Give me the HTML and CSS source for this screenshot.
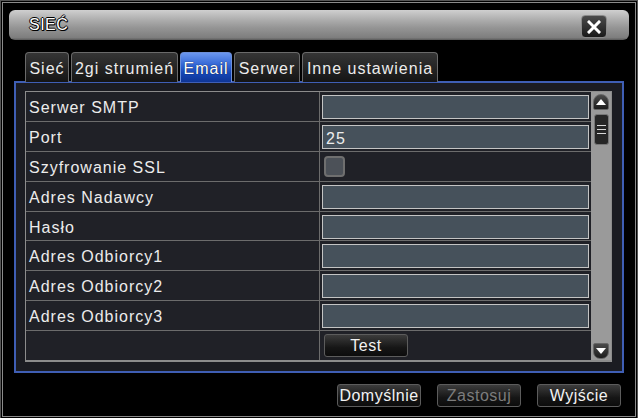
FILE: index.html
```html
<!DOCTYPE html>
<html lang="pl">
<head>
<meta charset="utf-8">
<title>SIEĆ</title>
<link rel="stylesheet" href="styles.css">
</head>
<body>
<div class="frame">
  <div class="titlebar">
    <span class="title">SIEĆ</span>
    <button class="close" aria-label="Zamknij">
      <svg width="14" height="14" viewBox="0 0 14 14"><path d="M2 2 L12 12 M12 2 L2 12" stroke="#fff" stroke-width="3" stroke-linecap="square"/></svg>
    </button>
  </div>
  <div class="tabs">
    <div class="tab t1">Sieć</div>
    <div class="tab t2">2gi strumień</div>
    <div class="tab t3 active">Email</div>
    <div class="tab t4">Serwer</div>
    <div class="tab t5">Inne ustawienia</div>
  </div>
  <div class="panel">
    <div class="table">
      <div class="rows">
        <div class="row"><div class="label">Serwer SMTP</div><div class="cell"><div class="input"></div></div></div>
        <div class="row"><div class="label">Port</div><div class="cell"><div class="input">25</div></div></div>
        <div class="row"><div class="label">Szyfrowanie SSL</div><div class="cell"><div class="check"></div></div></div>
        <div class="row"><div class="label">Adres Nadawcy</div><div class="cell"><div class="input"></div></div></div>
        <div class="row"><div class="label">Hasło</div><div class="cell"><div class="input"></div></div></div>
        <div class="row"><div class="label">Adres Odbiorcy1</div><div class="cell"><div class="input"></div></div></div>
        <div class="row"><div class="label">Adres Odbiorcy2</div><div class="cell"><div class="input"></div></div></div>
        <div class="row"><div class="label">Adres Odbiorcy3</div><div class="cell"><div class="input"></div></div></div>
        <div class="row last"><div class="label"></div><div class="cell"><div class="btn test">Test</div></div></div>
      </div>
      <div class="scrollbar">
        <div class="sb-up"><svg width="10" height="6" viewBox="0 0 10 6"><path d="M0 6 L5 0 L10 6 Z" fill="#fff"/></svg></div>
        <div class="sb-thumb"><span></span><span></span><span></span></div>
        <div class="sb-space"></div>
        <div class="sb-down"><svg width="10" height="6" viewBox="0 0 10 6"><path d="M0 0 L5 6 L10 0 Z" fill="#fff"/></svg></div>
      </div>
    </div>
  </div>
  <div class="footer">
    <div class="btn">Domyślnie</div>
    <div class="btn disabled">Zastosuj</div>
    <div class="btn">Wyjście</div>
  </div>
</div>
</body>
</html>
```

FILE: styles.css
```css
* { box-sizing: border-box; }
html, body { margin: 0; padding: 0; }
body {
  width: 638px;
  height: 418px;
  background: #000;
  overflow: hidden;
  font-family: "Liberation Sans", Arial, sans-serif;
  font-size: 16px;
  letter-spacing: 1px;
  color: #ececec;
  padding: 1px;
}
.frame {
  width: 634px;
  height: 415px;
  border: 1px solid #8a8a8a;
  outline: 1px solid #555;
  outline-offset: 1px;
  margin: 1px 0 0 1px;
  padding: 7px 0 0 6px;
  display: flex;
  flex-direction: column;
}
.titlebar {
  width: 620px;
  height: 30px;
  border-radius: 6px;
  background: linear-gradient(#cfcfcf, #ababab 35%, #949494 60%, #7e7e7e 92%, #5a5a5a);
  display: flex;
  align-items: center;
  justify-content: space-between;
  padding: 0 22px 0 20px;
}
.title {
  color: #fff;
  font-size: 16px;
  letter-spacing: 0.5px;
  text-shadow: -1px 0 #000, 1px 0 #000, 0 -1px #000, 0 1px #000, 1px 1px #000;
}
.close {
  width: 26px;
  height: 23px;
  margin-top: 3px;
  border: 1px solid #8a8a8a;
  border-radius: 4px;
  background: linear-gradient(#4a4a4a, #1a1a1a);
  display: flex;
  align-items: center;
  justify-content: center;
  padding: 0;
}
.tabs {
  display: flex;
  gap: 2px;
  margin: 12px 0 0 16px;
  height: 30px;
  position: relative;
  z-index: 1;
}
.tab {
  height: 30px;
  border: 1px solid #6a6a6a;
  border-bottom: none;
  border-radius: 4px 4px 0 0;
  background: linear-gradient(#353535, #141414);
  display: flex;
  align-items: center;
  justify-content: center;
  padding-top: 2px;
  white-space: nowrap;
}
.t1 { width: 44px; }
.t2 { width: 107px; }
.t3 { width: 52px; }
.t4 { width: 66px; }
.t5 { width: 136px; }
.tab.active {
  background: linear-gradient(#6a96ee, #2e62d2 45%, #1646b4 70%, #0e3596);
  border-color: #6d8fd8;
  color: #fff;
  text-shadow: 0 0 1px #001;
}
.panel {
  width: 610px;
  height: 292px;
  margin: -1px 0 0 5px;
  border: 2px solid #3f5eb4;
  background: #1b1c22;
  padding: 8px 10px 9px 9px;
}
.table {
  display: flex;
  height: 271px;
  border: 1px solid #8c8c8c;
  border-bottom-width: 2px;
}
.rows {
  flex: 1;
  display: flex;
  flex-direction: column;
  background: #202127;
}
.row {
  height: 30px;
  display: grid;
  grid-template-columns: 294px 1fr;
  border-bottom: 1px solid #6c6c6c;
}
.row.last { border-bottom: none; height: 29px; }
.label {
  border-right: 1px solid #6c6c6c;
  padding: 7px 0 0 3px;
  white-space: nowrap;
}
.cell {
  padding: 3px 0 0 2px;
}
.input {
  width: 267px;
  height: 24px;
  border: 1px solid #c4c4c4;
  background: #46515b;
  padding: 4px 0 0 3px;
  font-size: 16px;
}
.check {
  width: 21px;
  height: 21px;
  margin: 1px 0 0 2px;
  border: 2px solid #6f6f6f;
  border-radius: 4px;
  background: #4c5158;
}
.btn {
  width: 84px;
  height: 23px;
  border: 1px solid #5c5c5c;
  border-radius: 3px;
  background: linear-gradient(#3c3c3c, #161616 60%, #0c0c0c);
  display: flex;
  align-items: center;
  justify-content: center;
  padding-top: 1px;
  color: #f2f2f2;
  letter-spacing: 0.5px;
}
.btn.test { margin: 0 0 0 2px; }
.btn.disabled { color: #7c7c7c; }
.scrollbar {
  width: 20px;
  background: #9a9a9a;
  display: flex;
  flex-direction: column;
  align-items: center;
  padding: 2px 0 1px;
}
.sb-up, .sb-down {
  width: 16px;
  height: 16px;
  background: linear-gradient(#4a4a4a, #1c1c1c);
  border: 1px solid #666;
  display: flex;
  align-items: center;
  justify-content: center;
}
.sb-up { border-radius: 8px 8px 2px 2px; }
.sb-down { border-radius: 2px 2px 7px 7px; }
.sb-thumb {
  width: 15px;
  height: 31px;
  margin-top: 4px;
  border: 1px solid #777;
  border-radius: 3px;
  background: #262626;
  display: flex;
  flex-direction: column;
  align-items: center;
  justify-content: center;
  gap: 3px;
}
.sb-thumb span {
  width: 9px;
  height: 1px;
  background: #d8d8d8;
}
.sb-space { flex: 1; }
.footer {
  display: flex;
  gap: 16px;
  justify-content: flex-end;
  margin: 11px 14px 0 0;
}
```
